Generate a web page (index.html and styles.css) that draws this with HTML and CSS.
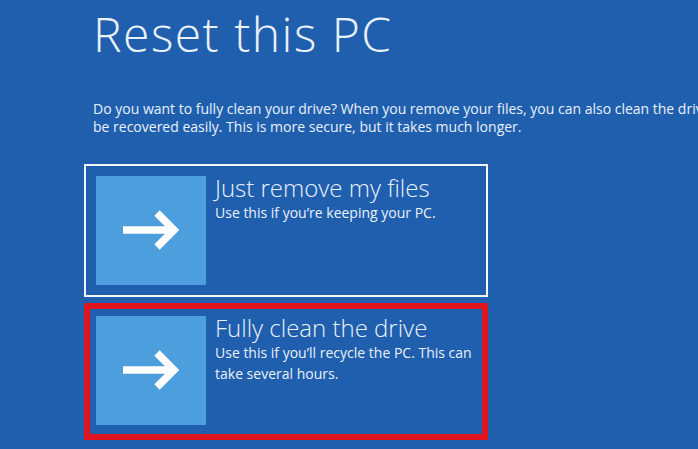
FILE: index.html
```html
<!DOCTYPE html>
<html lang="en">
<head>
<meta charset="utf-8">
<title>Reset this PC</title>
<link rel="stylesheet" href="styles.css">
</head>
<body>
<main class="page">
  <h1 class="title">Reset this PC</h1>
  <p class="intro">Do you want to fully clean your drive? When you remove your files, you can also clean the drive so that the files can't<br>be recovered easily. This is more secure, but it takes much longer.</p>
  <div class="options">
    <div class="option option-normal">
      <div class="tile">
        <svg class="arrow" viewBox="0 0 110 109" width="110" height="109" aria-hidden="true">
          <path d="M27 54 H77" />
          <path d="M61 37 L78 54 L61 71" />
        </svg>
      </div>
      <div class="option-text">
        <div class="option-title">Just remove my files</div>
        <div class="option-desc">Use this if you’re keeping your PC.</div>
      </div>
    </div>
    <div class="option option-marked">
      <div class="tile">
        <svg class="arrow" viewBox="0 0 110 109" width="110" height="109" aria-hidden="true">
          <path d="M27 54 H77" />
          <path d="M61 37 L78 54 L61 71" />
        </svg>
      </div>
      <div class="option-text">
        <div class="option-title">Fully clean the drive</div>
        <div class="option-desc">Use this if you’ll recycle the PC. This can<br>take several hours.</div>
      </div>
    </div>
  </div>
</main>
</body>
</html>
```

FILE: styles.css
```css
html, body {
  margin: 0;
  padding: 0;
  height: 100%;
}
body {
  background: #1f5fae;
  color: #eaf1f9;
  font-family: "Open Sans", "Noto Sans", "Liberation Sans", sans-serif;
  overflow: hidden;
}
.page {
  padding: 10px 0 0 84px;
  display: flex;
  flex-direction: column;
}
.title {
  margin: 0 0 0 9px;
  font-weight: 300;
  font-size: 48px;
  line-height: 48px;
  white-space: nowrap;
  letter-spacing: 1.5px;
}
.intro {
  margin: 42px 0 0 9px;
  font-size: 14px;
  line-height: 18px;
  white-space: nowrap;
}
.options {
  margin-top: 28px;
  width: 404px;
  display: flex;
  flex-direction: column;
  gap: 6px;
}
.option {
  display: flex;
  gap: 9px;
  box-sizing: border-box;
  width: 404px;
}
.option-normal {
  border: 2px solid #f2f6fb;
  padding: 10px;
}
.option-marked {
  border: 6px solid #e0141e;
  padding: 7px 6px 9px 6px;
}
.tile {
  width: 110px;
  height: 109px;
  background: #4c9fdc;
  flex: none;
}
.arrow {
  display: block;
  fill: none;
  stroke: #ffffff;
  stroke-width: 7.5;
  stroke-linecap: butt;
  stroke-linejoin: miter;
}
.option-text {
  display: flex;
  flex-direction: column;
}
.option-title {
  font-weight: 300;
  font-size: 24px;
  line-height: 24px;
  white-space: nowrap;
}
.option-desc {
  margin-top: 2px;
  font-size: 14px;
  line-height: 21px;
  white-space: nowrap;
}
```
